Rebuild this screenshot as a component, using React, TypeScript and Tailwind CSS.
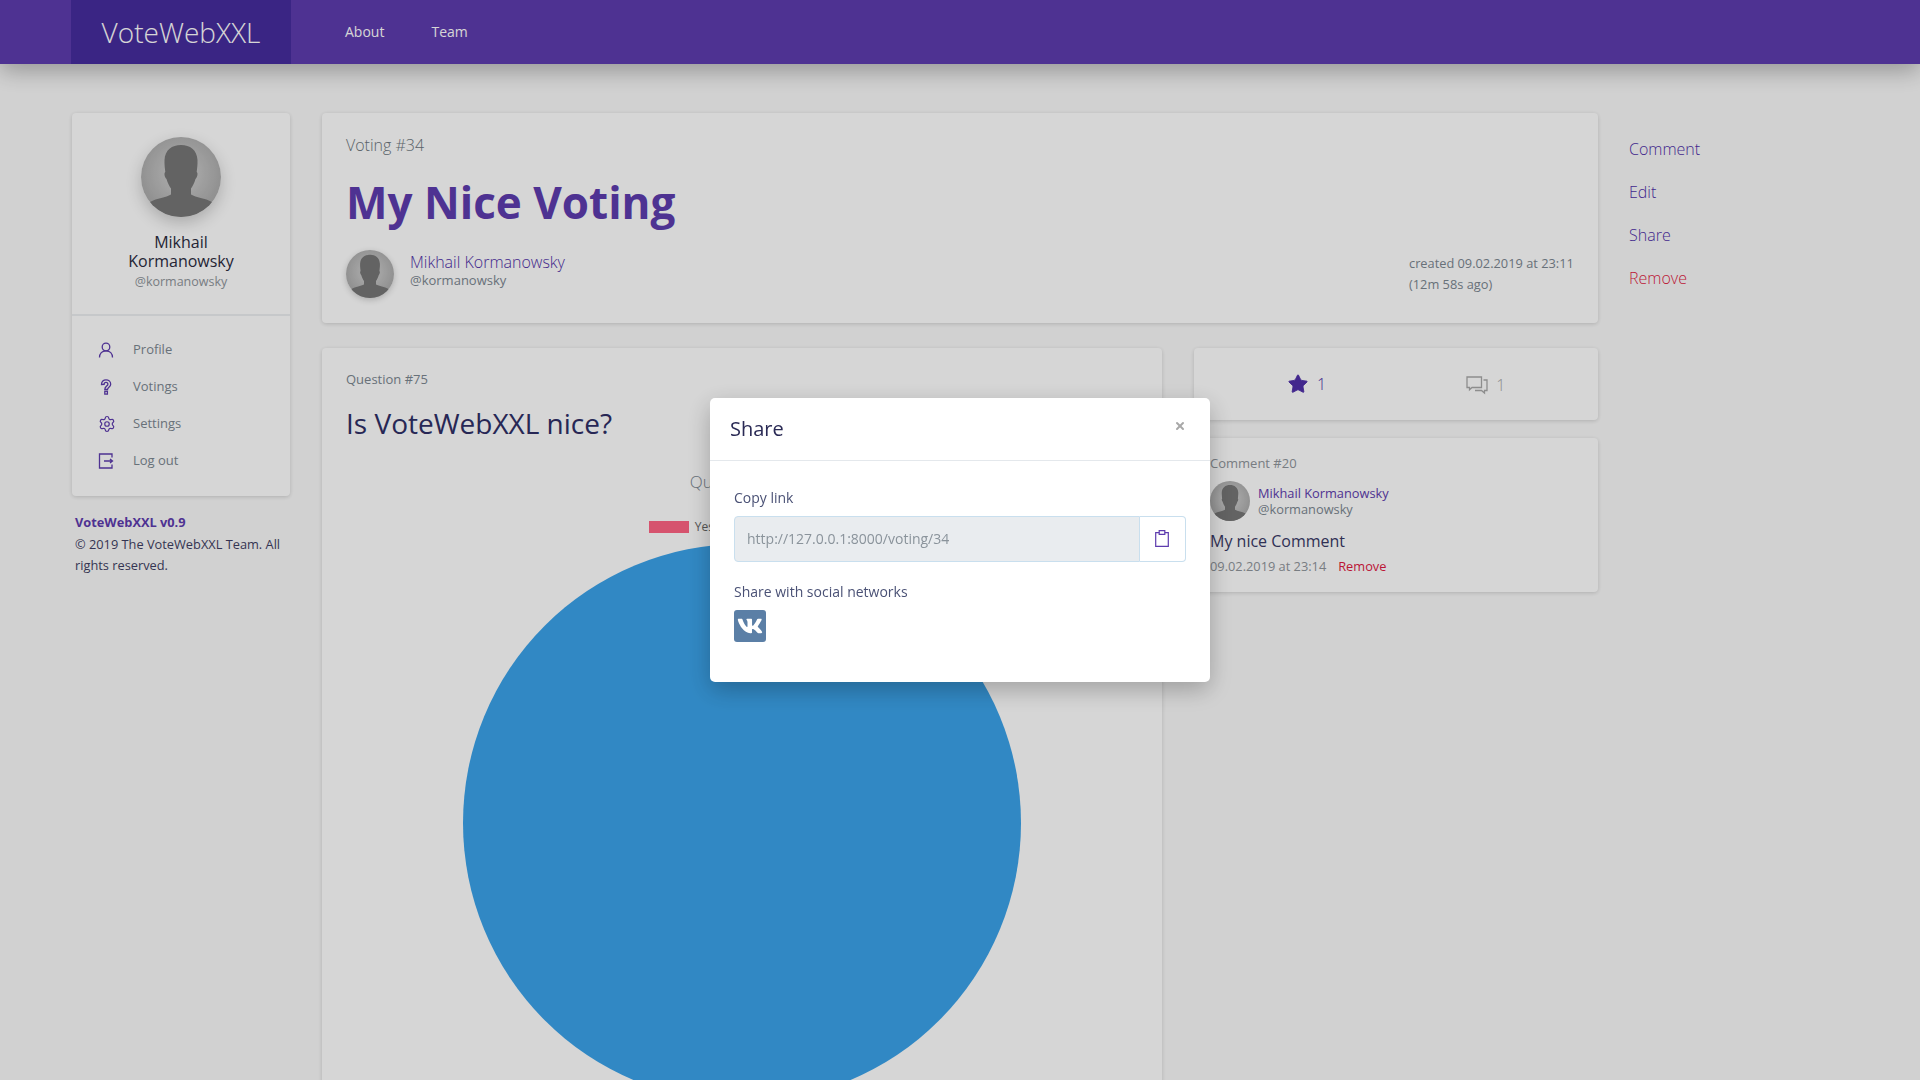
import { Settings, Star, X } from 'lucide-react';
import { FaVk } from 'react-icons/fa';

const Avatar = ({ className }: { className: string }) => (
  <svg viewBox="0 0 80 80" className={`shrink-0 rounded-full ${className}`}>
    <defs>
      <radialGradient id="avatarBg" cx="50%" cy="45%" r="60%">
        <stop offset="0%" stopColor="#d4d4d4" />
        <stop offset="100%" stopColor="#a6a6a6" />
      </radialGradient>
    </defs>
    <rect width="80" height="80" fill="url(#avatarBg)" />
    <path
      d="M40 8c9 0 16 5 16.500 15 .2 5-.5 9-.8 12 1.500 1 .8 5-1.200 7-1.200 4-3 7.500-4.500 9.500v6c5 3 14 3.500 21 7.500 2 1.500 4 4 5 7v8H4v-8c1-3 3-5.500 5-7 7-4 16-4.500 21-7.500v-6c-1.500-2-3.300-5.500-4.500-9.500-2-2-2.700-6-1.200-7-.3-3-1-7-.8-12C24 13 31 8 40 8z"
      fill="#767676"
    />
  </svg>
);

const ProfileIcon = () => (
  <svg viewBox="0 0 16 16" className="h-4 w-4 text-[#5e3cae]" fill="none" stroke="currentColor" strokeWidth="1.3">
    <circle cx="8" cy="5" r="3.800" />
    <path d="M1.500 15.500c0-4 2.500-6.700 6.500-6.700s6.500 2.700 6.500 6.700" />
  </svg>
);

const QuestionIcon = () => (
  <svg viewBox="0 0 16 16" className="h-4 w-4 text-[#5e3cae]" fill="none" stroke="currentColor" strokeWidth="1.300">
    <path d="M3.500 5.500C3.500 2.500 5.500.8 8 .8s4.700 1.700 4.700 4.400c0 3-3.200 3-3.200 5.300H6.800c0-3.200 3.100-3.400 3.100-5.300 0-1.100-.8-1.900-1.900-1.900s-1.900.8-1.900 2z" />
    <rect x="6.800" y="12.300" width="2.600" height="2.800" />
  </svg>
);

const LogoutIcon = () => (
  <svg viewBox="0 0 16 16" className="h-4 w-4 text-[#5e3cae]" fill="none" stroke="currentColor" strokeWidth="1.300">
    <path d="M14 4.500V1H1.500v14H14v-3.500" />
    <path d="M6 8h8.500M12 6l2.500 2-2.500 2" />
  </svg>
);

const ClipboardIcon = () => (
  <svg viewBox="0 0 14 17" className="h-[17px] w-[14px] text-[#5e3cae]" fill="none" stroke="currentColor" strokeWidth="1.200">
    <path d="M.7 2.700h12.600v13.600H.7z" />
    <path d="M4.200 4.300V.7h5.600v3.600z" fill="#ffffff" />
  </svg>
);

const CommentsIcon = () => (
  <svg viewBox="0 0 22 20" className="h-5 w-[22px] text-[#a9a9a9]" fill="none" stroke="currentColor" strokeWidth="1.300">
    <path d="M1 2h14.500v10.500H6l-2.500 2.300v-2.300H1z" />
    <path d="M17.500 5H21v10.500h-2.500v2.500L15.500 15.500H9" />
  </svg>
);

const menu = [
  { label: 'Profile', icon: <ProfileIcon /> },
  { label: 'Votings', icon: <QuestionIcon /> },
  { label: 'Settings', icon: <Settings size={18} strokeWidth={1.6} className="text-[#5e3cae]" /> },
  { label: 'Log out', icon: <LogoutIcon /> },
];

const card = 'rounded bg-white shadow-[0_1px_4px_rgba(0,0,0,0.16)]';

export default function App() {
  return (
    <div className="h-screen overflow-hidden bg-[#fafafa] font-['Open_Sans',sans-serif] text-[#2f2f66]">
      {/* Navbar */}
      <header className="relative flex h-16 bg-[#5e3cae] pl-[71px] shadow-[0_6px_24px_rgba(0,0,0,0.3)]">
        <div className="flex w-[220px] items-center justify-center bg-[#462d9e] text-[28px] font-light text-white">
          VoteWebXXL
        </div>
        <nav className="ml-[54px] flex items-center gap-[47px] text-sm text-white">
          <span>About</span>
          <span>Team</span>
        </nav>
      </header>

      <div className="flex pl-[72px] pt-[49px]">
        {/* Left sidebar */}
        <aside className="w-[218px] shrink-0">
          <div className={card}>
            <div className="flex h-[203px] flex-col items-center border-b-2 border-[#eceff1] pt-6 text-center">
              <Avatar className="h-20 w-20 shadow-[0_6px_16px_rgba(0,0,0,0.2)]" />
              <div className="mt-4 w-[150px] text-base leading-[19px] text-[#2c2c3e]">Mikhail Kormanowsky</div>
              <div className="mt-[1px] text-[12.500px] leading-[19px] text-[#8f959b]">@kormanowsky</div>
            </div>
            <ul className="flex flex-col gap-[13px] pb-[23px] pl-[26px] pt-[22px]">
              {menu.map((item) => (
                <li key={item.label} className="flex h-6 items-center text-[13px] text-[#7c8791]">
                  <span className="flex w-[35px] items-center">{item.icon}</span>
                  {item.label}
                </li>
              ))}
            </ul>
          </div>
          <div className="ml-[3px] mt-4 text-[12.800px] leading-[21.500px] text-[#3f3f63]">
            <div className="font-bold text-[#5e3cae]">VoteWebXXL v0.9</div>
            <div>© 2019 The VoteWebXXL Team. All rights reserved.</div>
          </div>
        </aside>

        {/* Main column */}
        <main className="ml-8 w-[1276px] shrink-0">
          <section className={`${card} flex h-[210px] justify-between px-6 pt-[21px]`}>
            <div>
              <div className="text-base font-light leading-[22px] text-[#6c757d]">Voting #34</div>
              <h1 className="mt-4 text-[44px] font-bold leading-[60px] text-[#5e3cae]">My Nice Voting</h1>
              <div className="mt-[18px] flex items-center gap-4">
                <Avatar className="h-12 w-12 shadow-[0_2px_6px_rgba(0,0,0,0.2)]" />
                <div className="-mt-[7px]">
                  <div className="text-base font-light leading-[20px] text-[#4f2fa8]">Mikhail Kormanowsky</div>
                  <div className="text-[13px] leading-[17px] text-[#7c8791]">@kormanowsky</div>
                </div>
              </div>
            </div>
            <div className="mt-[119px] w-[165px] whitespace-nowrap text-[12.800px] leading-[21px] text-[#7c8791]">
              created 09.02.2019 at 23:11
              <br />
              (12m 58s ago)
            </div>
          </section>

          <div className="mt-[25px] flex gap-8">
            <section className={`${card} h-[760px] w-[840px] shrink-0 px-6 pt-[21px]`}>
              <div className="text-[13px] leading-5 text-[#7c8791]">Question #75</div>
              <h2 className="mt-[13px] text-[28px] leading-[42px] text-[#2f2f66]">Is VoteWebXXL nice?</h2>
              <div className="mt-[26px] flex flex-col items-center">
                <div className="text-[17px] font-light leading-6 text-[#7c8791]">Question #75</div>
                <div className="mt-[25px] flex items-center gap-[6px] text-xs text-[#666666]">
                  <span className="h-3 w-10 bg-[#ff6384]" />
                  <span>Yes</span>
                  <span className="ml-[53px] h-3 w-10 bg-[#36a2eb]" />
                  <span>No</span>
                </div>
                <svg viewBox="0 0 558 558" className="mt-[9px] h-[558px] w-[558px]">
                  <circle cx="279" cy="279" r="279" fill="#3ba3ea" />
                </svg>
              </div>
            </section>

            <div className="flex-1">
              <section className={`${card} flex h-[72px] items-center text-base font-light`}>
                <div className="ml-[93px] flex items-center gap-2 text-[#4f2fa8]">
                  <Star size={22} fill="currentColor" strokeWidth={1} />
                  <span>1</span>
                </div>
                <div className="ml-[140px] flex items-center gap-2 pt-px text-[#a9a9a9]">
                  <CommentsIcon />
                  <span>1</span>
                </div>
              </section>
              <section className={`${card} mt-[18px] h-[154px] px-4 pt-[15px]`}>
                <div className="text-[13px] leading-5 text-[#8f959b]">Comment #20</div>
                <div className="mt-2 flex items-center gap-2">
                  <Avatar className="h-10 w-10" />
                  <div className="text-[12.800px] leading-4">
                    <div className="text-[#5e3cae]">Mikhail Kormanowsky</div>
                    <div className="text-[#7c8791]">@kormanowsky</div>
                  </div>
                </div>
                <div className="mt-[9px] text-base leading-[22px] text-[#3a3a66]">My nice Comment</div>
                <div className="mt-[4px] flex gap-[12px] text-[12.800px] leading-[20px]">
                  <span className="text-[#8f959b]">09.02.2019 at 23:14</span>
                  <span className="text-[#e0193f]">Remove</span>
                </div>
              </section>
            </div>
          </div>
        </main>

        {/* Actions */}
        <ul className="ml-[31px] flex flex-col gap-[19px] pt-[24px] text-base font-light leading-6 text-[#4f2fa8]">
          <li>Comment</li>
          <li>Edit</li>
          <li>Share</li>
          <li className="text-[#e0193f]">Remove</li>
        </ul>
      </div>

      {/* Backdrop and share modal */}
      <div className="fixed inset-0 bg-black/16" />
      <div className="fixed left-1/2 top-[398px] h-[284px] w-[500px] -translate-x-1/2 rounded-[5px] bg-white shadow-[0_8px_24px_rgba(0,0,0,0.25)]">
        <div className="relative flex h-[63px] items-center border-b border-[#e4e8ec] px-5">
          <span className="text-xl text-[#2a2a55]">Share</span>
          <X size={12} strokeWidth={4} className="absolute right-[24px] top-[22px] text-[#a8a8a8]" />
        </div>
        <div className="px-6 pt-[27px]">
          <div className="text-sm leading-5 text-[#4a5175]">Copy link</div>
          <div className="mt-2 flex h-[46px]">
            <div className="flex flex-1 items-center rounded-l border border-[#c9dfee] bg-[#e9ecef] pl-3 text-sm text-[#8a939b]">
              http://127.0.0.1:8000/voting/34
            </div>
            <div className="flex w-[46px] items-center justify-center rounded-r border border-l-0 border-[#c9dfee] pb-[2px] pr-[2px]">
              <ClipboardIcon />
            </div>
          </div>
          <div className="mt-5 text-sm leading-5 text-[#4a5175]">Share with social networks</div>
          <div className="mt-2 flex h-8 w-8 items-center justify-center rounded-[3px] bg-[#5b7fa6] text-white">
            <FaVk size={26} />
          </div>
        </div>
      </div>
    </div>
  );
}
